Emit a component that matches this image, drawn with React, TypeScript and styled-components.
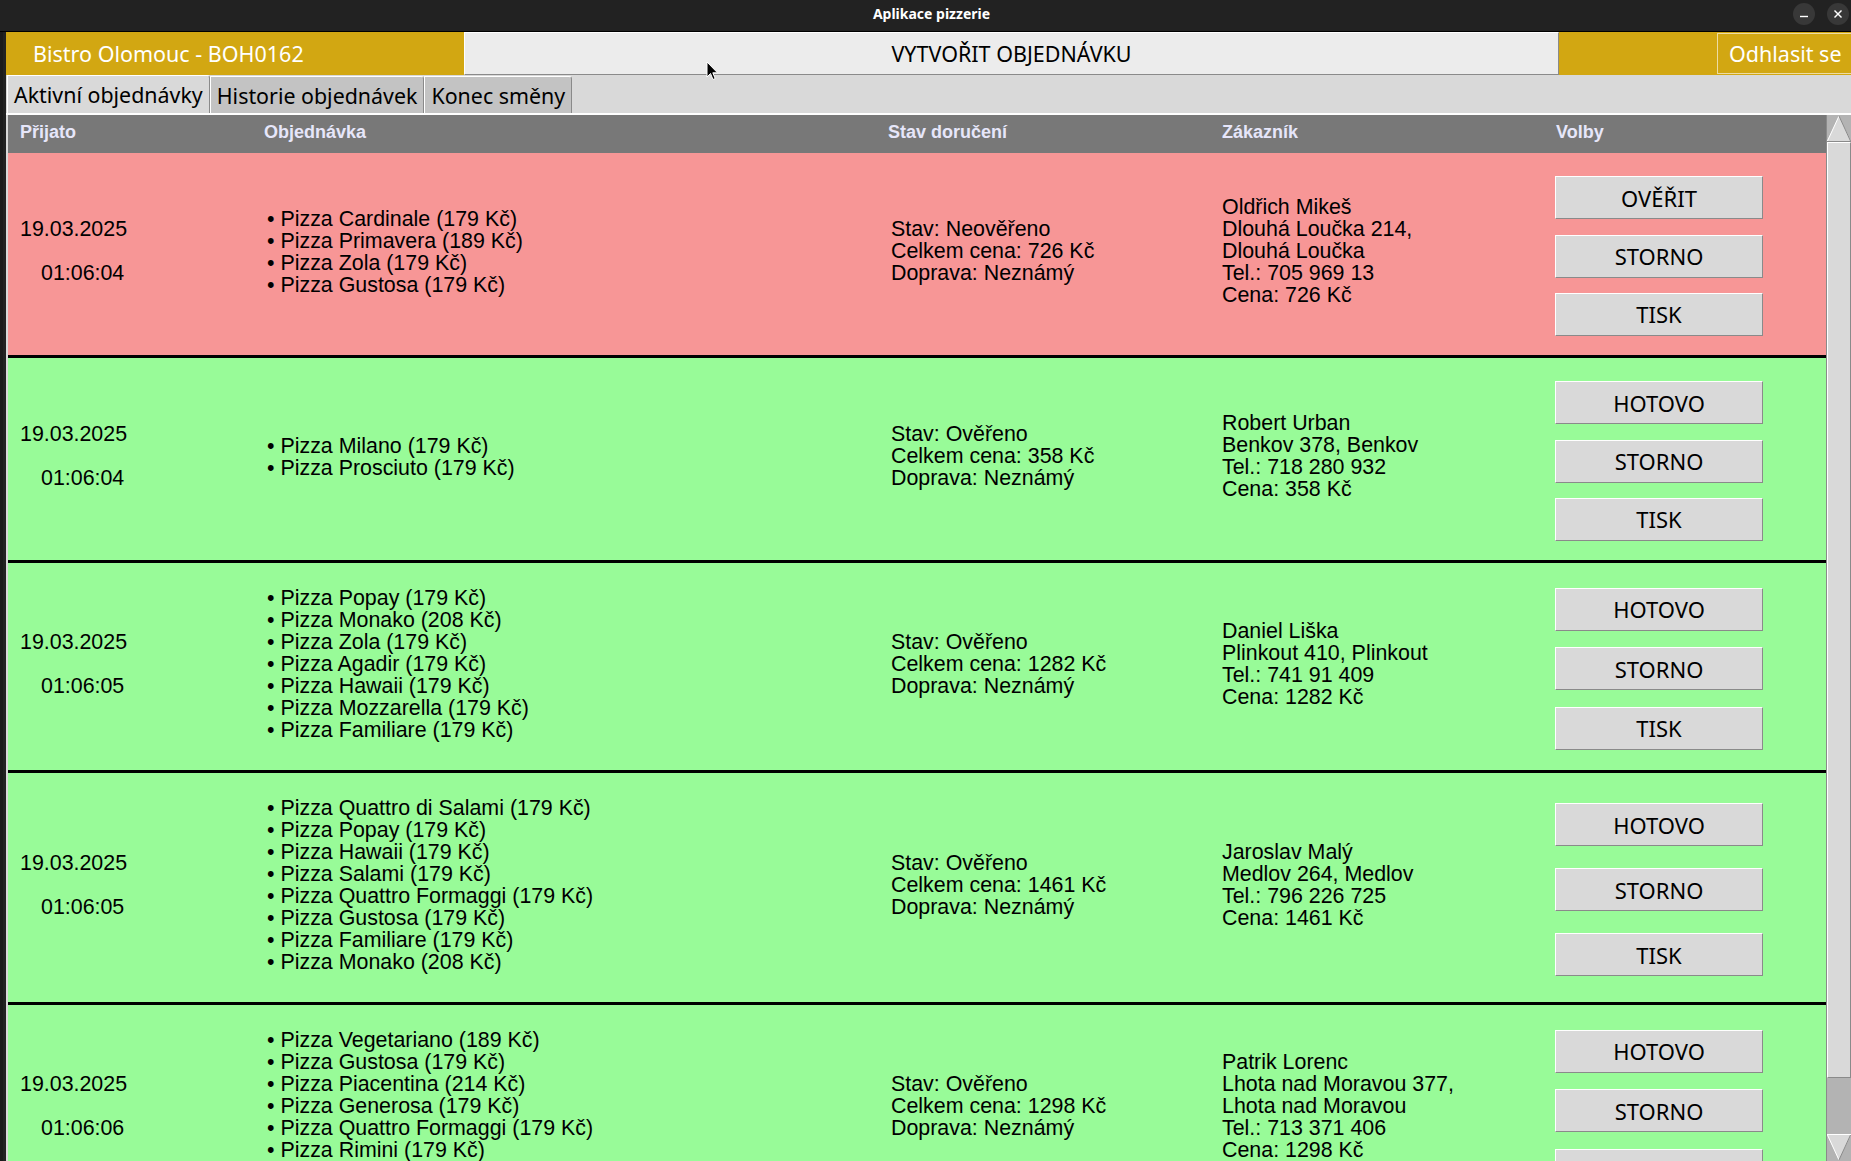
import React from "react";
import styled, { createGlobalStyle } from "styled-components";

const GlobalStyle = createGlobalStyle`
  html, body { margin: 0; padding: 0; background: #222222; overflow: hidden; }
  #root { width: 1851px; height: 1161px; }
  *, *::before, *::after { box-sizing: border-box; }
`;

const UI_FONT = `"Noto Sans", "Open Sans", sans-serif`;
const TEXT_FONT = `"Liberation Sans", Arial, sans-serif`;

const Window = styled.div`
  position: relative;
  width: 1851px;
  height: 1161px;
  display: flex;
  flex-direction: column;
  background: #222222;
  overflow: hidden;
`;

const TitleBar = styled.div`
  flex: 0 0 32px;
  display: grid;
  grid-template-columns: 1fr auto 1fr;
  align-items: center;
  background: #222222;
  border-bottom: 1px solid #000;
`;

const Title = styled.div`
  grid-column: 2;
  padding: 0 0 4px 12px;
  color: #ffffff;
  font: 700 14px ${UI_FONT};
`;

const WinControls = styled.div`
  grid-column: 3;
  justify-self: end;
  display: flex;
  gap: 12px;
  padding: 0 2px 4px 0;
`;

const WinButton = styled.div`
  width: 22px;
  height: 22px;
  border-radius: 50%;
  background: #383838;
  display: flex;
  align-items: center;
  justify-content: center;
`;

const Body = styled.div`
  flex: 1;
  min-height: 0;
  display: flex;
`;

const LeftEdge = styled.div`
  flex: 0 0 6px;
  background: #222222;
  border-left: 3px solid #1b1b1b;
`;

const Content = styled.div`
  flex: 1;
  min-width: 0;
  display: flex;
  flex-direction: column;
  background: #d9d9d9;
`;

const Header = styled.div`
  flex: 0 0 43px;
  display: flex;
  background: #d2a712;
`;

const Brand = styled.div`
  flex: 0 0 458px;
  display: flex;
  align-items: center;
  padding-left: 27px;
  color: #ffffff;
  font: 400 21.5px ${UI_FONT};
`;

const CreateButton = styled.div`
  flex: 0 0 1095px;
  display: flex;
  align-items: center;
  justify-content: center;
  background: #ececec;
  border: 1px solid;
  border-color: #ffffff #8a8a8a #8a8a8a #ffffff;
  color: #000;
  font: 400 21.5px ${UI_FONT};
`;

const HeaderSpacer = styled.div`
  flex: 1;
`;

const LogoutButton = styled.div`
  flex: 0 0 134px;
  margin: 1px 0 1px;
  display: flex;
  align-items: center;
  padding-left: 11px;
  border: 1px solid #ecdca4;
  border-right: none;
  color: #ffffff;
  font: 400 21.5px ${UI_FONT};
`;

const TabStrip = styled.div`
  flex: 0 0 40px;
  display: flex;
  align-items: flex-end;
  padding: 0 0 0 1px;
  background: #d9d9d9;
  border-bottom: 2px solid #ffffff;
`;

const Tab = styled.div<{ $active?: boolean }>`
  height: ${(p) => (p.$active ? 38 : 37)}px;
  display: flex;
  align-items: center;
  padding: 0 6px;
  background: ${(p) => (p.$active ? "#d9d9d9" : "#c3c3c3")};
  border-top: 1px solid #ffffff;
  border-left: 1px solid #ffffff;
  border-right: 1px solid #8a8a8a;
  border-top-right-radius: 3px;
  color: #000;
  font: 400 21.4px ${UI_FONT};
  white-space: nowrap;
`;

const TableArea = styled.div`
  flex: 1;
  min-height: 0;
  display: flex;
`;

const List = styled.div`
  flex: 1;
  min-width: 0;
  overflow: hidden;
  border-left: 2px solid #d9d9d9;
`;

const COLUMNS = "244px 624px 334px 334px 1fr";

const TableHead = styled.div`
  height: 38px;
  display: grid;
  grid-template-columns: ${COLUMNS};
  align-items: center;
  padding: 0 0 4px 12px;
  background: #787878;
  color: #e6e6fa;
  font: 700 18px ${TEXT_FONT};
`;

const Row = styled.div<{ $verified: boolean }>`
  min-height: 205px;
  display: grid;
  grid-template-columns: ${COLUMNS};
  padding-left: 12px;
  background: ${(p) => (p.$verified ? "#98fb98" : "#f79696")};
  border-bottom: 3px solid #000000;
  color: #000;
  font: 400 21.4px ${TEXT_FONT};
  line-height: 22px;
`;

const DateCell = styled.div`
  align-self: center;
  display: flex;
  flex-direction: column;
  gap: 22px;
  margin-bottom: 6px;
`;

const TimeText = styled.div`
  margin-left: 21px;
`;

const OrderCell = styled.div`
  align-self: center;
  padding: 24px 0 29px 3px;
`;

const TextBlock = styled.div<{ $indent?: number }>`
  align-self: center;
  margin-bottom: 6px;
  padding-left: ${(p) => p.$indent ?? 0}px;
  white-space: nowrap;
`;

const Line = styled.div`
  white-space: nowrap;
`;

const Actions = styled.div`
  display: flex;
  flex-direction: column;
  justify-content: space-evenly;
  align-items: flex-start;
  padding: 8px 0 4px;
  margin-left: -1px;
`;

const ActionButton = styled.div`
  width: 208px;
  height: 43px;
  display: flex;
  align-items: center;
  justify-content: center;
  background: #d9d9d9;
  border: 1px solid;
  border-color: #ffffff #8a8a8a #8a8a8a #ffffff;
  color: #000;
  font: 400 22px ${UI_FONT};
`;

const ScrollBar = styled.div`
  flex: 0 0 25px;
  display: flex;
  flex-direction: column;
  background: #b3b3b3;
  border-left: 1px solid #8a8a8a;
`;

const ArrowBox = styled.div`
  flex: 0 0 27px;
  display: flex;
  align-items: stretch;
  justify-content: stretch;
`;

const Slider = styled.div`
  flex: 0 0 936px;
  background: #d9d9d9;
  border: 1px solid;
  border-color: #ffffff #8a8a8a #8a8a8a #ffffff;
`;

const Trough = styled.div`
  flex: 1;
`;

const Cursor = styled.svg`
  position: absolute;
  left: 706px;
  top: 61px;
  pointer-events: none;
`;

type Order = {
  date: string;
  time: string;
  items: string[];
  verified: boolean;
  total: string;
  customer: string[];
};

const orders: Order[] = [
  {
    date: "19.03.2025",
    time: "01:06:04",
    items: [
      "Pizza Cardinale (179 Kč)",
      "Pizza Primavera (189 Kč)",
      "Pizza Zola (179 Kč)",
      "Pizza Gustosa (179 Kč)",
    ],
    verified: false,
    total: "726 Kč",
    customer: [
      "Oldřich Mikeš",
      "Dlouhá Loučka 214,",
      "Dlouhá Loučka",
      "Tel.: 705 969 13",
      "Cena: 726 Kč",
    ],
  },
  {
    date: "19.03.2025",
    time: "01:06:04",
    items: ["Pizza Milano (179 Kč)", "Pizza Prosciuto (179 Kč)"],
    verified: true,
    total: "358 Kč",
    customer: ["Robert Urban", "Benkov 378, Benkov", "Tel.: 718 280 932", "Cena: 358 Kč"],
  },
  {
    date: "19.03.2025",
    time: "01:06:05",
    items: [
      "Pizza Popay (179 Kč)",
      "Pizza Monako (208 Kč)",
      "Pizza Zola (179 Kč)",
      "Pizza Agadir (179 Kč)",
      "Pizza Hawaii (179 Kč)",
      "Pizza Mozzarella (179 Kč)",
      "Pizza Familiare (179 Kč)",
    ],
    verified: true,
    total: "1282 Kč",
    customer: ["Daniel Liška", "Plinkout 410, Plinkout", "Tel.: 741 91 409", "Cena: 1282 Kč"],
  },
  {
    date: "19.03.2025",
    time: "01:06:05",
    items: [
      "Pizza Quattro di Salami (179 Kč)",
      "Pizza Popay (179 Kč)",
      "Pizza Hawaii (179 Kč)",
      "Pizza Salami (179 Kč)",
      "Pizza Quattro Formaggi (179 Kč)",
      "Pizza Gustosa (179 Kč)",
      "Pizza Familiare (179 Kč)",
      "Pizza Monako (208 Kč)",
    ],
    verified: true,
    total: "1461 Kč",
    customer: ["Jaroslav Malý", "Medlov 264, Medlov", "Tel.: 796 226 725", "Cena: 1461 Kč"],
  },
  {
    date: "19.03.2025",
    time: "01:06:06",
    items: [
      "Pizza Vegetariano (189 Kč)",
      "Pizza Gustosa (179 Kč)",
      "Pizza Piacentina (214 Kč)",
      "Pizza Generosa (179 Kč)",
      "Pizza Quattro Formaggi (179 Kč)",
      "Pizza Rimini (179 Kč)",
      "Pizza Cardinale (179 Kč)",
    ],
    verified: true,
    total: "1298 Kč",
    customer: [
      "Patrik Lorenc",
      "Lhota nad Moravou 377,",
      "Lhota nad Moravou",
      "Tel.: 713 371 406",
      "Cena: 1298 Kč",
    ],
  },
];

const UpArrow = () => (
  <svg width="24" height="27" viewBox="0 0 24 27">
    <polygon points="12,1 0,26 24,26" fill="#d9d9d9" />
    <line x1="12" y1="1" x2="0.5" y2="26" stroke="#ffffff" strokeWidth="1" />
    <line x1="12" y1="1" x2="23.5" y2="26" stroke="#8a8a8a" strokeWidth="1" />
    <line x1="0" y1="26.5" x2="24" y2="26.5" stroke="#8a8a8a" strokeWidth="1" />
  </svg>
);

const DownArrow = () => (
  <svg width="24" height="27" viewBox="0 0 24 27">
    <polygon points="0,1 24,1 12,26" fill="#d9d9d9" />
    <line x1="0" y1="0.5" x2="24" y2="0.5" stroke="#ffffff" strokeWidth="1" />
    <line x1="0.5" y1="1" x2="12" y2="26" stroke="#ffffff" strokeWidth="1" />
    <line x1="23.5" y1="1" x2="12" y2="26" stroke="#8a8a8a" strokeWidth="1" />
  </svg>
);

export default function App() {
  return (
    <>
      <GlobalStyle />
      <Window>
        <TitleBar>
          <Title>Aplikace pizzerie</Title>
          <WinControls>
            <WinButton>
              <svg width="10" height="10" viewBox="0 0 10 10">
                <line x1="1" y1="7.5" x2="9" y2="7.5" stroke="#ffffff" strokeWidth="1.4" />
              </svg>
            </WinButton>
            <WinButton>
              <svg width="10" height="10" viewBox="0 0 10 10">
                <line x1="1.5" y1="1.5" x2="8.5" y2="8.5" stroke="#ffffff" strokeWidth="1.4" />
                <line x1="8.5" y1="1.5" x2="1.5" y2="8.5" stroke="#ffffff" strokeWidth="1.4" />
              </svg>
            </WinButton>
          </WinControls>
        </TitleBar>
        <Body>
          <LeftEdge />
          <Content>
            <Header>
              <Brand>Bistro Olomouc - BOH0162</Brand>
              <CreateButton>VYTVOŘIT OBJEDNÁVKU</CreateButton>
              <HeaderSpacer />
              <LogoutButton>Odhlasit se</LogoutButton>
            </Header>
            <TabStrip>
              <Tab $active>Aktivní objednávky</Tab>
              <Tab>Historie objednávek</Tab>
              <Tab>Konec směny</Tab>
            </TabStrip>
            <TableArea>
              <List>
                <TableHead>
                  <div>Přijato</div>
                  <div>Objednávka</div>
                  <div>Stav doručení</div>
                  <div>Zákazník</div>
                  <div>Volby</div>
                </TableHead>
                {orders.map((o, i) => (
                  <Row key={i} $verified={o.verified}>
                    <DateCell>
                      <div>{o.date}</div>
                      <TimeText>{o.time}</TimeText>
                    </DateCell>
                    <OrderCell>
                      {o.items.map((it, j) => (
                        <Line key={j}>• {it}</Line>
                      ))}
                    </OrderCell>
                    <TextBlock $indent={3}>
                      <Line>Stav: {o.verified ? "Ověřeno" : "Neověřeno"}</Line>
                      <Line>Celkem cena: {o.total}</Line>
                      <Line>Doprava: Neznámý</Line>
                    </TextBlock>
                    <TextBlock>
                      {o.customer.map((c, j) => (
                        <Line key={j}>{c}</Line>
                      ))}
                    </TextBlock>
                    <Actions>
                      <ActionButton>{o.verified ? "HOTOVO" : "OVĚŘIT"}</ActionButton>
                      <ActionButton>STORNO</ActionButton>
                      <ActionButton>TISK</ActionButton>
                    </Actions>
                  </Row>
                ))}
              </List>
              <ScrollBar>
                <ArrowBox>
                  <UpArrow />
                </ArrowBox>
                <Slider />
                <Trough />
                <ArrowBox>
                  <DownArrow />
                </ArrowBox>
              </ScrollBar>
            </TableArea>
          </Content>
        </Body>
        <Cursor width="13" height="20" viewBox="0 0 13 20">
          <path d="M1 1 L1 16 L4.5 12.5 L7 18.5 L9.2 17.5 L6.8 11.8 L11.5 11.8 Z" fill="#000" stroke="#fff" strokeWidth="1" />
        </Cursor>
      </Window>
    </>
  );
}
